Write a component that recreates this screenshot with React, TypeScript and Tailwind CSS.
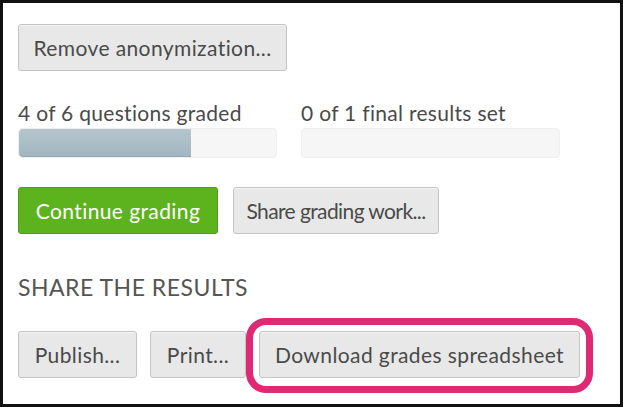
const font = { fontFamily: "Lato, 'Open Sans', sans-serif" };

function GreyButton({ label, className = "" }: { label: string; className?: string }) {
  return (
    <button
      className={`h-[47px] rounded-[3px] border border-[#c4c4c4] bg-[#e8e8e8] text-[21px] text-[#4a4a4a] shadow-[inset_0_1px_0_#f4f4f4] ${className}`}
    >
      {label}
    </button>
  );
}

function Progress({ label, pct }: { label: string; pct: number }) {
  return (
    <div className="w-[259px]">
      <div className="h-[24px] text-[21px] leading-[24px] tracking-[0.3px] text-[#4a4a4a]">{label}</div>
      <div className="mt-[3px] h-[30px] overflow-hidden rounded-[4px] border border-[#efefef] bg-[#f6f6f6]">
        <div
          className="h-full rounded-l-[4px] border-b border-[#93a8b2] bg-gradient-to-b from-[#b4c5cd] to-[#a3b6bf]"
          style={{ width: `${pct}%` }}
        />
      </div>
    </div>
  );
}

export default function App() {
  return (
    <div className="h-[408px] w-[624px] bg-white">
      <div
        className="h-[407px] w-[623px] border-[3px] border-[#111] bg-white pl-[15px] pt-[21px]"
        style={font}
      >
        <GreyButton label="Remove anonymization..." className="h-[45px] w-[269px] tracking-[0.4px]" />

        <div className="mt-[30px] flex gap-[24px]">
          <Progress label="4 of 6 questions graded" pct={67} />
          <Progress label="0 of 1 final results set" pct={0} />
        </div>

        <div className="mt-[29px] flex gap-[15px]">
          <button className="h-[47px] w-[200px] rounded-[3px] border border-[#4f9c16] bg-[#5db31d] text-[21px] tracking-[0.4px] text-white">
            Continue grading
          </button>
          <GreyButton label="Share grading work..." className="w-[206px] tracking-[-0.6px]" />
        </div>

        <div className="mt-[39px] h-[28px] text-[23px] leading-[28px] tracking-[0.5px] text-[#555]">SHARE THE RESULTS</div>

        <div className="mt-[30px] flex items-start gap-[13px]">
          <GreyButton label="Publish..." className="w-[119px] tracking-[0.4px]" />
          <GreyButton label="Print..." className="w-[96px] tracking-[0.4px]" />
          <div className="relative">
            <span className="pointer-events-none absolute -bottom-[15px] -left-[13px] -right-[13px] -top-[13px] rounded-[20px] border-[7px] border-[#dd2a73]" />
            <GreyButton label="Download grades spreadsheet" className="w-[321px] tracking-[0.4px]" />
          </div>
        </div>
      </div>
    </div>
  );
}
